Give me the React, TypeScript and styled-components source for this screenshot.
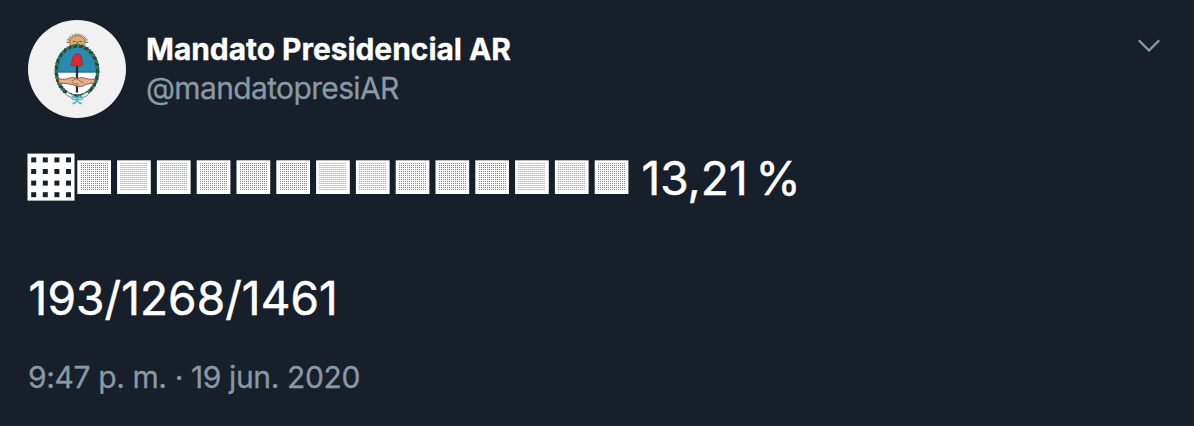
import React from 'react';
import styled, { createGlobalStyle } from 'styled-components';

const Global = createGlobalStyle`
  body { margin: 0; background: #17202a; }
  * { box-sizing: border-box; }
`;

const Card = styled.article`
  height: 426px;
  padding: 20px 28px 0;
  background: #17202a;
  color: #fff;
  font-family: Inter, "Liberation Sans", sans-serif;
  white-space: pre;
`;

const Header = styled.header`
  display: flex;
  height: 98px;
`;

const Avatar = styled.div`
  width: 98px;
  height: 98px;
  border-radius: 50%;
  overflow: hidden;
  background: #f1f1f1;
`;

const Names = styled.div`
  flex: 1;
  padding: 10px 0 0 20px;
`;

const Line = styled.div<{ $size: number; $height: number; $spacing: number; $word?: number; $muted?: boolean; $bold?: boolean }>`
  font-size: ${p => p.$size}px;
  line-height: ${p => p.$height}px;
  letter-spacing: ${p => p.$spacing}px;
  word-spacing: ${p => p.$word ?? 0}px;
  font-weight: ${p => (p.$bold ? 700 : 400)};
  color: ${p => (p.$muted ? '#8899a6' : '#fff')};
  -webkit-text-stroke: ${p => (p.$size > 40 ? 0.5 : 0.3)}px currentColor;
`;

const MenuIcon = styled.svg`
  width: 24px;
  height: 16px;
  margin: 18px 5px 0 0;
`;

const Body = styled.div`
  padding-top: 30px;
`;

const Progress = styled.div`
  display: flex;
  align-items: center;
  height: 60px;
`;

const Blocks = styled.svg`
  flex: none;
  margin-left: -1px;
  margin-right: 11.5px;
`;

const Counts = styled.div`
  padding: 60px 0 0 0.6px;
`;

const Timestamp = styled.div`
  padding-top: 30px;
`;

const leaves = Array.from({ length: 46 }, (_, i) => {
  const a = (i / 46) * Math.PI * 2;
  return { x: 49 + Math.cos(a) * 20.7, y: 51 + Math.sin(a) * 25.2, r: (a * 180) / Math.PI };
});

const rays = Array.from({ length: 19 }, (_, i) => {
  const a = Math.PI + (i / 18) * Math.PI;
  return {
    x1: 49.3 + Math.cos(a) * 7,
    y1: 22.5 + Math.sin(a) * 6,
    x2: 49.3 + Math.cos(a) * 10.8,
    y2: 22.5 + Math.sin(a) * 9.2,
  };
});

const Crest = () => (
  <svg width="98" height="98" viewBox="0 0 98 98">
    <defs>
      <clipPath id="oval"><ellipse cx="49" cy="51" rx="20" ry="24.8" /></clipPath>
    </defs>
    {rays.map((r, i) => <line key={i} {...r} stroke={i % 2 ? '#b3a083' : '#6f6a60'} strokeWidth=".9" />)}
    <ellipse cx="49.3" cy="22.3" rx="7.8" ry="6.8" fill="#d6ab6c" stroke="#8d7452" strokeWidth=".9" />
    <path d="M45 21.5h2.2M51.4 21.5h2.2M49.3 21.5v2.2" stroke="#6b4c30" strokeWidth="1.1" />
    <g clipPath="url(#oval)">
      <rect x="26" y="24" width="46" height="54" fill="#fff" />
      <rect x="26" y="24" width="46" height="28.2" fill="#2a8bb0" />
      <rect x="26" y="51.6" width="46" height="1" fill="#1d6682" />
    </g>
    <ellipse cx="49" cy="51" rx="20.7" ry="25" fill="none" stroke="#2f5a48" strokeWidth="3.2" />
    {leaves.map((l, i) => (
      <ellipse key={i} cx={l.x} cy={l.y} rx="2.4" ry="1" transform={`rotate(${l.r + 35} ${l.x} ${l.y})`} fill={i % 2 ? '#2f7d5f' : '#23473b'} />
    ))}
    <path d="M49 44v28.5" stroke="#33222a" strokeWidth="2.2" />
    <path d="M43 44.6c1.3-1.6.9-4 1.8-6.4 1.2-3.4 2.6-4.4 5-4.4 3 .2 3.8 2.6 3.6 4.9-.1 1.8 1.3 3.2 1.5 5.5l-2.2 1.9-2.6-.6-1.8.6-2.3-.8-2.6.3z" fill="#e0282e" stroke="#7c2a31" strokeWidth=".7" />
    <path d="M30.3 58.8c5.5 1.4 9-.1 13.2-1.3l5.5.8 5.2-.8c4.6 1.5 8.2 2.5 12.8 1.3l-.6 4.2c-4 .3-6.8.8-9.6 2-2.8 1.8-6 2.2-8.6.8-5.2-1.7-10.6-2.8-17-2.4z" fill="#e6b08d" stroke="#7d4f3d" strokeWidth=".9" />
    <path d="M43.5 61l4.5-2.4 7.8 4.4M46.5 63.2l4.3 1.6M44 62l2 2" fill="none" stroke="#8a5a47" strokeWidth=".8" />
    <path d="M38.2 73.6l6.5 3.4M60.2 73.6l-6.5 3.4" stroke="#e8e6e6" strokeWidth="3.6" />
    <path d="M38.5 75.2l5.5 2.6M60 75.2l-5.5 2.6M40.5 72.6l4 2.5M58 72.6l-4 2.5" stroke="#8c7478" strokeWidth=".8" />
    <path d="M49.2 78.5c-2.5-3-6-2-5.2 0 .7 1.6 3.5 1.2 5.2 0zM49.2 78.5c2.5-3 6-2 5.2 0-.7 1.6-3.5 1.2-5.2 0zM49 79c-.6 3-2.4 4.6-4.6 4.6M49.4 79c.6 3 2.4 4.6 4.6 4.6" fill="none" stroke="#55b9cb" strokeWidth="1.5" />
  </svg>
);

const shades = [
  { dot: 0.54, gap: 0.06 },
  { dot: 0.3, gap: 0.2 },
  { dot: 0.38, gap: 0.13 },
  { dot: 0.52, gap: 0.05 },
  { dot: 0.56, gap: 0.04 },
];

const BlockRow = () => (
  <Blocks width="603" height="60" viewBox="0 0 603 60">
    <rect x=".5" y="5.6" width="47" height="47" fill="#fff" />
    {[0, 1, 2, 3].map(r => [0, 1, 2, 3].map(c => (
      <rect key={`${r}-${c}`} x={4.2 + c * 11.6} y={9.4 + r * 11.6} width="5" height="5" fill="#17202a" />
    )))}
    {Array.from({ length: 14 }, (_, i) => {
      const x = 50.3 + i * 39.8;
      const start = Math.round(x + 3.3);
      const shade = shades[i % 5];
      return (
        <g key={i} stroke="#17202a">
          <rect x={x} y="12.3" width="33.7" height="33.7" fill="#fff" stroke="none" />
          {Array.from({ length: 14 }, (_, row) => (
            <g key={row} strokeDasharray="1 1">
              <path d={`M${start} ${15.5 + row * 2}h27`} strokeOpacity={shade.dot} />
              <path d={`M${start + 1} ${15.5 + row * 2}h26`} strokeOpacity={shade.gap} />
            </g>
          ))}
        </g>
      );
    })}
  </Blocks>
);

export default function App() {
  return (
    <>
      <Global />
      <Card>
        <Header>
          <Avatar><Crest /></Avatar>
          <Names>
            <Line $size={30} $height={39} $spacing={-0.06} $bold>Mandato Presidencial AR</Line>
            <Line $size={30} $height={38} $spacing={-0.64} $muted>@mandatopresiAR</Line>
          </Names>
          <MenuIcon viewBox="0 0 24 16">
            <path d="M2.5 3l9.5 9.5L21.5 3" fill="none" stroke="#8899a6" strokeWidth="2.4" strokeLinecap="round" strokeLinejoin="round" />
          </MenuIcon>
        </Header>
        <Body>
          <Progress>
            <BlockRow />
            <Line $size={46} $height={60} $spacing={0} $word={-5}>13,21 %</Line>
          </Progress>
          <Counts><Line $size={46} $height={60} $spacing={0.08}>193/1268/1461</Line></Counts>
          <Timestamp><Line $size={30} $height={39} $spacing={-0.38} $muted>9:47 p. m. · 19 jun. 2020</Line></Timestamp>
        </Body>
      </Card>
    </>
  );
}
